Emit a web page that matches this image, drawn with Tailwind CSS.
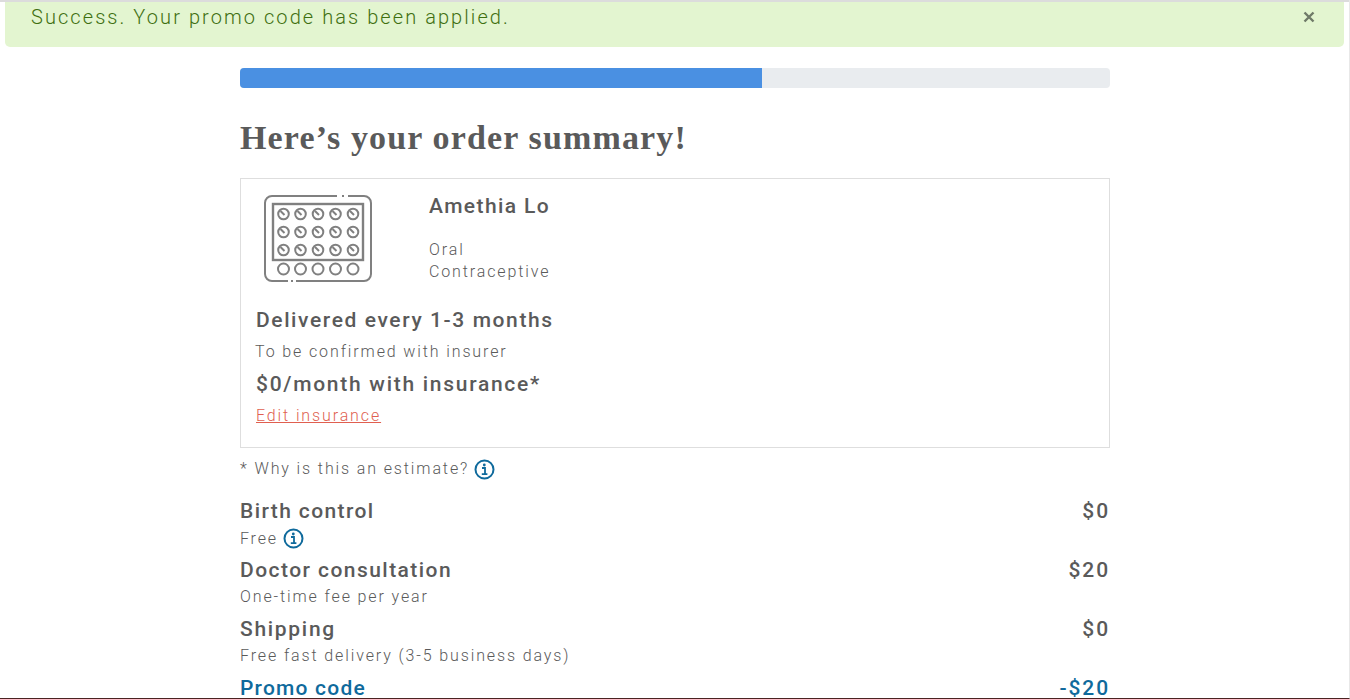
<!DOCTYPE html>
<html lang="en">
<head>
    <meta charset="UTF-8">
    <title>Order summary</title>
    <script src="https://cdn.jsdelivr.net/npm/@tailwindcss/browser@4"></script>
</head>
<body class="bg-white h-[699px] overflow-hidden font-['Roboto',sans-serif] text-[#5a5a5a]">
    <div class="h-[699px] overflow-hidden border-r border-b border-r-[#e8e8e8] border-b-[#4a2222] flex flex-col">
        <div class="border-t-2 border-[#dcdcdc] px-[5px] shrink-0">
            <div class="h-[45px] bg-[#e3f5d0] rounded-b-[5px] pl-[26px] pr-[29px] flex justify-between items-start">
                <p class="text-[20px] leading-[30px] tracking-[2.07px] font-light text-[#3f7010]">Success. Your promo code has been applied.</p>
                <svg class="mt-[9px]" width="12" height="12" viewBox="0 0 12 12"><path d="M1.5 1.5 10.5 10.5M10.5 1.5 1.5 10.5" stroke="#6f7a68" stroke-width="2.4"/></svg>
            </div>
        </div>

        <main class="w-[870px] ml-[240px] mt-[21px]">
            <div class="h-5 rounded-[4px] bg-[#e9ecef] overflow-hidden">
                <div class="h-5 w-[60%] bg-[#4a90e2]"></div>
            </div>

            <h1 class="mt-[30px] text-[34px] leading-[40px] font-bold tracking-[1.15px] font-['Liberation_Serif',serif]">Here’s your order summary!</h1>

            <section class="mt-[20px] h-[270px] border border-[#dedede] pl-[15px] pt-[15px]">
                <div class="flex">
                    <svg class="ml-[7px] shrink-0" width="110" height="90" viewBox="0 0 110 90" fill="none" stroke="#808080" stroke-width="2">
                        <defs>
                            <g id="pill"><circle r="5.3"/><path d="M-3 -3 1 1" stroke-width="2"/></g>
                        </defs>
                        <path d="M74 2H9a7 7 0 0 0-7 7V80a7 7 0 0 0 7 7H25M33 87H101a7 7 0 0 0 7-7V9a7 7 0 0 0-7-7H85"/>
                        <path d="M79 2h2M28 87h2"/>
                        <rect x="10" y="10" width="90" height="56" stroke-width="2.4"/>
                        <use href="#pill" x="20.5" y="20"/><use href="#pill" x="37.5" y="20"/><use href="#pill" x="55" y="20"/><use href="#pill" x="72.5" y="20"/><use href="#pill" x="90" y="20"/>
                        <use href="#pill" x="20.5" y="38"/><use href="#pill" x="37.5" y="38"/><use href="#pill" x="55" y="38"/><use href="#pill" x="72.5" y="38"/><use href="#pill" x="90" y="38"/>
                        <use href="#pill" x="20.5" y="56"/><use href="#pill" x="37.5" y="56"/><use href="#pill" x="55" y="56"/><use href="#pill" x="72.5" y="56"/><use href="#pill" x="90" y="56"/>
                        <circle cx="20.5" cy="75" r="5.5"/><circle cx="37.5" cy="75" r="5.5"/><circle cx="55" cy="75" r="5.5"/><circle cx="72.5" cy="75" r="5.5"/><circle cx="90" cy="75" r="5.5"/>
                    </svg>
                    <div class="ml-[56px]">
                        <h2 class="text-[21px] leading-[24px] font-medium tracking-[1.4px]">Amethia Lo</h2>
                        <p class="mt-[21px] text-[16px] leading-[22px] font-light tracking-[1.88px]">Oral<br>Contraceptive</p>
                    </div>
                </div>
                <h3 class="mt-[20px] text-[21px] leading-[32px] font-medium tracking-[1.6px]">Delivered every 1-3 months</h3>
                <p class="text-[16px] leading-[31px] font-light tracking-[1.88px] -ml-px">To be confirmed with insurer</p>
                <h3 class="mt-px text-[21px] leading-[33px] font-medium tracking-[1.72px]">$0/month with insurance*</h3>
                <a class="block text-[16px] leading-[30px] font-light tracking-[1.88px] text-[#e05f50] underline">Edit insurance</a>
            </section>

            <p class="mt-[9px] flex items-center text-[16px] leading-[24px] font-light tracking-[1.88px]">* Why is this an estimate?
                <svg class="ml-[5px]" width="21" height="21" viewBox="0 0 21 21" fill="none"><circle cx="10.5" cy="10.5" r="9" stroke="#0f6a9c" stroke-width="2"/><path d="M8 9h3v6M7.8 15.2h5.6" stroke="#0f6a9c" stroke-width="1.8"/><circle cx="10.3" cy="6" r="1.4" fill="#0f6a9c"/></svg>
            </p>

            <div class="mt-[16px] flex justify-between text-[21px] leading-[28px] font-medium tracking-[1.4px]"><span>Birth control</span><span class="tracking-[1.9px]">$0</span></div>
            <p class="flex items-center text-[16px] leading-[26px] font-light tracking-[1.8px] h-[27px]">Free
                <svg class="ml-[5px]" width="21" height="21" viewBox="0 0 21 21" fill="none"><circle cx="10.5" cy="10.5" r="9" stroke="#0f6a9c" stroke-width="2"/><path d="M8 9h3v6M7.8 15.2h5.6" stroke="#0f6a9c" stroke-width="1.8"/><circle cx="10.3" cy="6" r="1.4" fill="#0f6a9c"/></svg>
            </p>

            <div class="mt-[4px] flex justify-between text-[21px] leading-[28px] font-medium tracking-[1.45px]"><span>Doctor consultation</span><span class="tracking-[1.9px]">$20</span></div>
            <p class="text-[16px] leading-[25px] font-light tracking-[1.88px]">One-time fee per year</p>

            <div class="mt-[6px] flex justify-between text-[21px] leading-[28px] font-medium tracking-[1.7px]"><span>Shipping</span><span class="tracking-[1.9px]">$0</span></div>
            <p class="text-[16px] leading-[25px] font-light tracking-[1.88px]">Free fast delivery (3-5 business days)</p>

            <div class="mt-[6px] flex justify-between text-[21px] leading-[28px] font-medium tracking-[1.2px] text-[#0f6a9c]"><span>Promo code</span><span class="tracking-[1.9px]">-$20</span></div>
        </main>
    </div>
</body>
</html>
